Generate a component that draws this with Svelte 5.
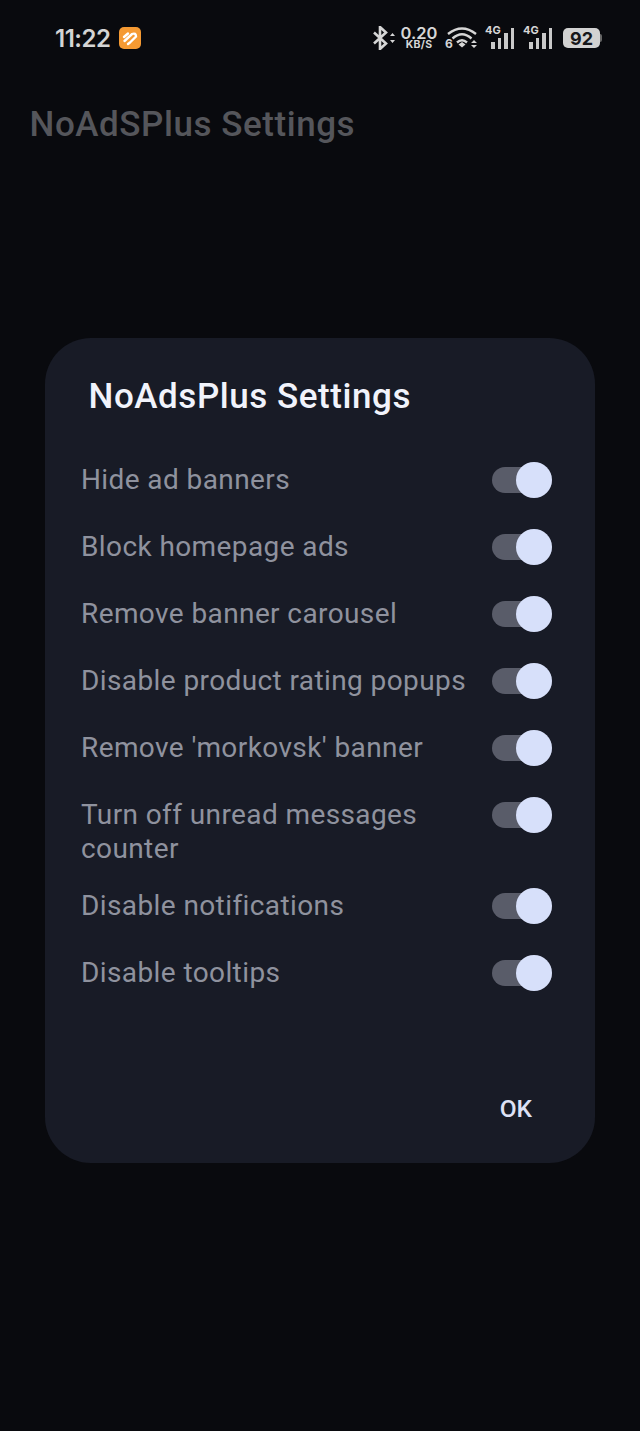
<script>
  const options = [
    'Hide ad banners',
    'Block homepage ads',
    'Remove banner carousel',
    'Disable product rating popups',
    "Remove 'morkovsk' banner",
    'Turn off unread messages counter',
    'Disable notifications',
    'Disable tooltips'
  ];
</script>

<div class="screen">
  <!-- status bar -->
  <div class="status">
    <div class="status-left">
      <span class="time">11:22</span>
      <svg class="app-badge" width="22" height="22" viewBox="0 0 22 22">
        <rect width="22" height="22" rx="5" fill="#f59a33" />
        <path d="M5 10 L9 6.500 M5.500 14 L13 7 Q17 5.500 17 9.500 L11 15.500 M9 17 L11 15.500" fill="none" stroke="#fff" stroke-width="2.4" stroke-linecap="round" />
      </svg>
    </div>
    <div class="status-right">
      <svg class="bt" width="23" height="24" viewBox="0 0 23 24">
        <path d="M1 6.500 L13 17.500 L7 23 V1 L13 6.500 L1 17.500" fill="none" stroke="#d6d6d6" stroke-width="2.6" />
        <path d="M17 10 L19.500 7 L22 10 Z M17 14 L19.500 17 L22 14 Z" fill="#d6d6d6" />
      </svg>
      <div class="speed"><span class="speed-num">0.20</span><span class="speed-unit">KB/S</span></div>
      <svg class="wifi" width="32" height="22" viewBox="0 0 32 22">
        <path d="M3 7 Q17 -4 31 7 M7.500 11.500 Q17 3 26.500 11.500 M12 15.500 Q17 11 22 15.500" fill="none" stroke="#d6d6d6" stroke-width="2.4" />
        <path d="M13.500 17.500 L17 15 L20.500 17.500 L17 20.500 Z" fill="#d6d6d6" />
        <path d="M26 16 L29 13 L32 16 Z M26 18 L29 21 L32 18 Z" fill="#d6d6d6" />
      </svg>
      <span class="wifi-six">6</span>
      {#each [0, 1] as sim}
        <div class="signal" data-sim={sim}>
          <span class="net">4G</span>
          <div class="bars">
            <i style="height:7px"></i>
            <i style="height:11px"></i>
            <i style="height:16px"></i>
            <i style="height:21px"></i>
          </div>
        </div>
      {/each}
      <div class="battery"><span class="battery-body">92</span><span class="battery-cap"></span></div>
    </div>
  </div>

  <div class="app-title">NoAdSPlus Settings</div>

  <div class="dialog">
    <h2>NoAdsPlus Settings</h2>
    <div class="list">
      {#each options as label}
        <div class="row">
          <span class="label">{label}</span>
          <span class="switch"><span class="thumb"></span></span>
        </div>
      {/each}
    </div>
    <div class="actions"><span class="ok">OK</span></div>
  </div>
</div>

<style>
  :global(body) { margin: 0; background: #090a0e; }

  .screen {
    width: 640px; height: 1431px; overflow: hidden;
    background: #090a0e; display: flex; flex-direction: column;
    font-family: Roboto, sans-serif;
  }

  .status {
    display: flex; justify-content: space-between; align-items: center;
    height: 26px; padding: 25px 38px 0 55px;
  }
  .status-left { display: flex; align-items: center; gap: 9px; }
  .time { font-family: Inter, sans-serif; font-size: 24px; font-weight: 600; color: #d4d4d4; letter-spacing: -0.5px; }
  .status-right { position: relative; display: flex; align-items: center; }

  .speed { display: flex; flex-direction: column; align-items: center; color: #d6d6d6; width: 36px; margin-left: 5px; }
  .speed-num { font-family: Inter, sans-serif; font-size: 16.500px; font-weight: 600; line-height: 13px; }
  .speed-unit { font-family: Inter, sans-serif; font-size: 10.5px; font-weight: 700; line-height: 10px; letter-spacing: 0.3px; }

  .wifi { margin-left: 8px; overflow: visible; }
  .wifi-six {
    position: absolute; left: 72px; top: 11px;
    font-family: Inter, sans-serif; font-size: 12px; font-weight: 700; color: #d6d6d6;
  }

  .signal { position: relative; width: 30px; height: 26px; margin-left: 8px; }
  .net {
    position: absolute; left: 0; top: -2px;
    font-family: Inter, sans-serif; font-size: 11px; font-weight: 700; color: #d6d6d6;
  }
  .bars { position: absolute; right: 1px; bottom: 2px; display: flex; align-items: flex-end; gap: 3px; }
  .bars i { display: block; width: 3.500px; background: #c9c9c9; }

  .battery { display: flex; align-items: center; margin-left: 10px; }
  .battery-body {
    width: 37px; height: 20px; border-radius: 5px; background: #d2d2d2; color: #16171a;
    font-family: Inter, sans-serif; font-size: 18px; font-weight: 700;
    display: flex; align-items: center; justify-content: center;
  }
  .battery-cap { width: 2px; height: 8px; background: #666; border-radius: 0 2px 2px 0; }

  .app-title {
    margin: 53px 0 0 29.500px; font-size: 35px; font-weight: 500; color: #55565b; line-height: 42px;
    letter-spacing: 0.55px;
  }

  .dialog {
    margin: 192px 45px 0; height: 825px; box-sizing: border-box;
    background: #181b26; border-radius: 46px;
    padding: 38px 43px 0 36px; display: flex; flex-direction: column;
  }
  h2 {
    margin: 0 0 0 7.500px; font-size: 35px; font-weight: 500; color: #f1f3fb; line-height: 42px;
    letter-spacing: 0.55px;
  }

  .list { margin-top: 27.500px; display: flex; flex-direction: column; }
  .row {
    display: flex; justify-content: space-between; align-items: flex-start;
    box-sizing: border-box; min-height: 67px; padding: 17px 0 6px;
  }
  .label {
    width: 395px; font-size: 28px; line-height: 34px; color: #8f929e; letter-spacing: 0.4px;
  }
  .switch {
    position: relative; display: block; width: 60px; height: 26px;
    margin-top: 4px; border-radius: 13px; background: #595c69;
    flex-shrink: 0;
  }
  .thumb {
    position: absolute; right: 0; top: -5px; width: 36px; height: 36px;
    border-radius: 50%; background: #d7e0fa;
  }

  .actions { margin-top: auto; display: flex; justify-content: flex-end; padding: 0 20px 38px 0; }
  .ok { font-size: 24.500px; font-weight: 500; color: #dde1f5; line-height: 32px; }
</style>
